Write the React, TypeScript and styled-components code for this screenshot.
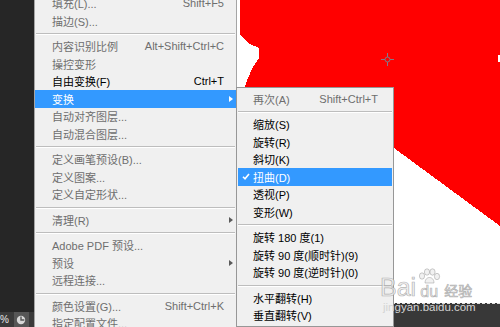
import React from "react";
import styled, { createGlobalStyle } from "styled-components";

type MenuItem = {
  label: string;
  shortcut?: string;
  disabled?: boolean;
  active?: boolean;
  checked?: boolean;
  submenu?: boolean;
};

type MenuEntry = MenuItem | "sep";

const mainItems: MenuEntry[] = [
  { label: "填充(L)...", shortcut: "Shift+F5", disabled: true },
  { label: "描边(S)...", disabled: true },
  "sep",
  { label: "内容识别比例", shortcut: "Alt+Shift+Ctrl+C", disabled: true },
  { label: "操控变形", disabled: true },
  { label: "自由变换(F)", shortcut: "Ctrl+T" },
  { label: "变换", active: true, submenu: true },
  { label: "自动对齐图层...", disabled: true },
  { label: "自动混合图层...", disabled: true },
  "sep",
  { label: "定义画笔预设(B)...", disabled: true },
  { label: "定义图案...", disabled: true },
  { label: "定义自定形状...", disabled: true },
  "sep",
  { label: "清理(R)", disabled: true, submenu: true },
  "sep",
  { label: "Adobe PDF 预设...", disabled: true },
  { label: "预设", disabled: true, submenu: true },
  { label: "远程连接...", disabled: true },
  "sep",
  { label: "颜色设置(G)...", shortcut: "Shift+Ctrl+K", disabled: true },
  { label: "指定配置文件...", disabled: true },
];

const subItems: MenuEntry[] = [
  { label: "再次(A)", shortcut: "Shift+Ctrl+T", disabled: true },
  "sep",
  { label: "缩放(S)" },
  { label: "旋转(R)" },
  { label: "斜切(K)" },
  { label: "扭曲(D)", active: true, checked: true },
  { label: "透视(P)" },
  { label: "变形(W)" },
  "sep",
  { label: "旋转 180 度(1)" },
  { label: "旋转 90 度(顺时针)(9)" },
  { label: "旋转 90 度(逆时针)(0)" },
  "sep",
  { label: "水平翻转(H)" },
  { label: "垂直翻转(V)" },
];

const GlobalStyle = createGlobalStyle`
  html, body {
    margin: 0;
    padding: 0;
    background: #262626;
  }
  body {
    font-family: "Liberation Sans", "Noto Sans CJK SC", sans-serif;
  }
`;

const Root = styled.div`
  position: relative;
  display: flex;
  width: 500px;
  height: 327px;
  overflow: hidden;
  background: #262626;
`;

const LeftPanel = styled.div`
  display: flex;
  flex-direction: column;
  justify-content: flex-end;
  width: 34px;
  flex-shrink: 0;
  background: #262626;
`;

const StatusBar = styled.div`
  display: flex;
  align-items: center;
  gap: 5px;
  height: 15px;
  background: #3a3a3a;
  color: #e8e8e8;
  font-size: 10px;
`;

const StatusIcon = styled.div`
  display: flex;
  align-items: center;
  justify-content: center;
  width: 15px;
  height: 15px;
  background: #565656;
`;

const MainMenu = styled.div`
  align-self: flex-start;
  box-sizing: border-box;
  width: 203px;
  flex-shrink: 0;
  margin-top: -5.5px;
  background: #f0f0f0;
  border-left: 1px solid #a5a5a5;
  border-right: 1px solid #a5a5a5;
`;

const MainRow = styled.div<{ $active?: boolean; $disabled?: boolean }>`
  display: grid;
  grid-template-columns: 17px 1fr auto 12px;
  align-items: center;
  height: 17.5px;
  font-size: 11px;
  white-space: nowrap;
  color: ${({ $active, $disabled }) =>
    $active ? "#ffffff" : $disabled ? "#6e6e6e" : "#000000"};
  background: ${({ $active }) => ($active ? "#3399ff" : "transparent")};
`;

const SubMenu = styled.div`
  position: absolute;
  left: 236px;
  top: 87px;
  box-sizing: border-box;
  width: 158px;
  padding: 2px 0;
  background: #f0f0f0;
  border: 1px solid #979797;
`;

const SubRow = styled.div<{ $active?: boolean; $disabled?: boolean }>`
  display: grid;
  grid-template-columns: 15px 1fr auto;
  align-items: center;
  height: 17.5px;
  margin: 0 1px;
  padding-right: 14px;
  font-size: 11px;
  white-space: nowrap;
  color: ${({ $active, $disabled }) =>
    $active ? "#ffffff" : $disabled ? "#6e6e6e" : "#000000"};
  background: ${({ $active }) => ($active ? "#3399ff" : "transparent")};
`;

const Separator = styled.div<{ $inset?: number }>`
  display: flex;
  align-items: center;
  height: 8px;
  padding: 0 ${({ $inset }) => $inset ?? 1}px;

  &::before {
    content: "";
    flex: 1;
    height: 1px;
    background: #bdbdbd;
    box-shadow: 0 1px 0 #ffffff;
  }
`;

const Shortcut = styled.span`
  text-align: right;
`;

const Arrow = styled.span<{ $color: string }>`
  justify-self: start;
  margin-left: 5px;
  width: 0;
  height: 0;
  border-top: 3.5px solid transparent;
  border-bottom: 3.5px solid transparent;
  border-left: 4px solid ${({ $color }) => $color};
`;

const CheckCell = styled.span`
  display: flex;
  justify-content: center;
`;

const Canvas = styled.div`
  display: flex;
  flex-direction: column;
  flex: 1;
  background: #ffffff;
`;

const Drawing = styled.svg`
  display: block;
  flex: 1;
`;

const BottomBar = styled.div`
  height: 23px;
  background: #383838;
  border-top: 1px dashed #e0e0e0;
`;

const Watermark = styled.div`
  position: absolute;
  left: 380px;
  top: 268px;
  display: flex;
  flex-direction: column;
  align-items: flex-start;
  pointer-events: none;
`;

const LogoLine = styled.div`
  display: flex;
  align-items: flex-end;
  color: rgba(236, 236, 236, 0.75);
  -webkit-text-stroke: 0.7px rgba(150, 150, 150, 0.7);
  font-family: "Liberation Sans", "Noto Sans CJK SC", sans-serif;
`;

const LogoBig = styled.span`
  font-size: 25px;
  line-height: 24px;
`;

const PawBlock = styled.div`
  display: flex;
  flex-direction: column;
  align-items: center;
  margin-left: 1px;
`;

const LogoSmall = styled.span`
  font-size: 16px;
  line-height: 15px;
`;

const LogoCn = styled.span`
  margin-left: 3px;
  font-size: 14px;
  line-height: 15px;
`;

const SiteText = styled.div`
  margin-top: 2px;
  margin-left: 3px;
  color: #d4d4d4;
  font-size: 11.5px;
`;

const CheckMark = () => (
  <svg width="8" height="7" viewBox="0 0 8 7">
    <path d="M1 3.8 L3 5.8 L7 1" fill="none" stroke="#ffffff" strokeWidth="1.6" />
  </svg>
);

const renderMain = (entry: MenuEntry, i: number) => {
  if (entry === "sep") return <Separator key={i} />;
  return (
    <MainRow key={i} $active={entry.active} $disabled={entry.disabled}>
      <span />
      <span>{entry.label}</span>
      <Shortcut>{entry.shortcut}</Shortcut>
      {entry.submenu ? (
        <Arrow $color={entry.active ? "#ffffff" : "#5a5a5a"} />
      ) : (
        <span />
      )}
    </MainRow>
  );
};

const renderSub = (entry: MenuEntry, i: number) => {
  if (entry === "sep") return <Separator key={i} $inset={1} />;
  return (
    <SubRow key={i} $active={entry.active} $disabled={entry.disabled}>
      <CheckCell>{entry.checked && <CheckMark />}</CheckCell>
      <span>{entry.label}</span>
      <Shortcut>{entry.shortcut}</Shortcut>
    </SubRow>
  );
};

const App: React.FC = () => {
  return (
    <>
      <GlobalStyle />
      <Root>
        <LeftPanel>
          <StatusBar>
            <span>%</span>
            <StatusIcon>
              <svg width="10" height="10" viewBox="0 0 10 10">
                <circle cx="5" cy="5" r="4.2" fill="#d8d8d8" />
                <path d="M5 1.5 V5 H8.3" fill="none" stroke="#565656" strokeWidth="1.4" />
              </svg>
            </StatusIcon>
          </StatusBar>
        </LeftPanel>

        <MainMenu>{mainItems.map(renderMain)}</MainMenu>

        <Canvas>
          <Drawing viewBox="237 0 263 303" preserveAspectRatio="none" shapeRendering="crispEdges">
            <polygon
              fill="#ff0000"
              points="240,0 500,0 500,55 498,55 498,62 500,62 500,226 394,148 330,100 300,87 245,87 247,80 253,67 259,58 259,48 248,43 240,35"
            />
            <g stroke="#7c7c8c" strokeWidth="1" fill="none" shapeRendering="auto">
              <circle cx="387.5" cy="59.5" r="2.5" />
              <path d="M381 59.5 H385 M390 59.5 H394 M387.5 53 V57 M387.5 62 V66" />
            </g>
          </Drawing>
          <BottomBar />
        </Canvas>

        <SubMenu>{subItems.map(renderSub)}</SubMenu>

        <Watermark>
          <LogoLine>
            <LogoBig>Bai</LogoBig>
            <PawBlock>
              <svg width="24" height="16" viewBox="0 0 24 16">
                <g fill="rgba(236,236,236,0.75)" stroke="rgba(150,150,150,0.7)" strokeWidth="0.7">
                  <ellipse cx="5" cy="8" rx="2.6" ry="3.2" />
                  <ellipse cx="10" cy="4" rx="2.6" ry="3.2" />
                  <ellipse cx="15.5" cy="4" rx="2.6" ry="3.2" />
                  <ellipse cx="20" cy="8.5" rx="2.6" ry="3.2" />
                  <path d="M8 15 C8 11 10.5 9.5 12.5 9.5 C14.5 9.5 17 11 17 15 Z" />
                </g>
              </svg>
              <LogoSmall>du</LogoSmall>
            </PawBlock>
            <LogoCn>经验</LogoCn>
          </LogoLine>
          <SiteText>jingyan.baidu.com</SiteText>
        </Watermark>
      </Root>
    </>
  );
};

export default App;
